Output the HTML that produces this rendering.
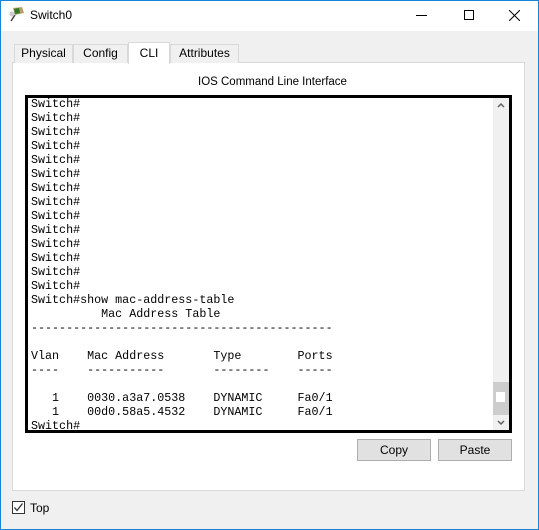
<!DOCTYPE html><html><head><style>
*{margin:0;padding:0;box-sizing:border-box}
body{width:539px;height:530px;background:#f0f0f0;font-family:"Liberation Sans",sans-serif;font-size:12px;position:relative;overflow:hidden}
.abs{position:absolute}
.tab{position:absolute;top:44px;height:19px;border:1px solid #d9d9d9;border-bottom:none;background:#f0f0f0;font-size:12px;text-align:center;line-height:17px;color:#000}
pre{font-family:"Liberation Mono",monospace;font-size:11.7px;line-height:14px;color:#000;position:absolute;left:3px;top:-1px}
.btn{position:absolute;top:439px;width:74px;height:22px;background:#e1e1e1;border:1px solid #adadad;text-align:center;line-height:20px;font-size:12px}
</style></head><body>
<div class="abs" style="left:0;top:0;width:539px;height:31px;background:#fff"></div>
<svg class="abs" style="left:8px;top:6px" width="18" height="18" viewBox="0 0 18 18"><path d="M5 2l9-1 2 6-9 2z" fill="#b8a060"/><path d="M6 3l5-1 1 5-5 1z" fill="#2a7a2a"/><path d="M7 9l-4 6" stroke="#444" stroke-width="1.5"/><circle cx="4" cy="8" r="2.5" fill="#ccc"/></svg>
<div class="abs" style="left:30px;top:8px;font-size:12px">Switch0</div>
<div class="abs" style="left:416px;top:15px;width:11px;height:1px;background:#000"></div>
<div class="abs" style="left:464px;top:10px;width:10px;height:10px;border:1px solid #000"></div>
<svg class="abs" style="left:509px;top:10px" width="11" height="11"><path d="M0 0L11 11M11 0L0 11" stroke="#000" stroke-width="1"/></svg>
<div class="abs" style="left:12px;top:62px;width:513px;height:429px;background:#fff;border:1px solid #d9d9d9"></div>
<div class="tab" style="left:14px;width:59px">Physical</div>
<div class="tab" style="left:73px;width:55px">Config</div>
<div class="tab" style="left:128px;top:42px;height:22px;width:42px;background:#fff;line-height:21px">CLI</div>
<div class="tab" style="left:170px;width:69px">Attributes</div>
<div class="abs" style="left:198px;top:76px;font-size:11.5px">IOS Command Line Interface</div>
<div class="abs" style="left:25px;top:95px;width:487px;height:338px;border:3px solid #000;background:#fff;overflow:hidden">
<pre>Switch#
Switch#
Switch#
Switch#
Switch#
Switch#
Switch#
Switch#
Switch#
Switch#
Switch#
Switch#
Switch#
Switch#
Switch#show mac-address-table
          Mac Address Table
-------------------------------------------

Vlan    Mac Address       Type        Ports
----    -----------       --------    -----

   1    0030.a3a7.0538    DYNAMIC     Fa0/1
   1    00d0.58a5.4532    DYNAMIC     Fa0/1
Switch#</pre>
<div class="abs" style="left:465px;top:0;width:16px;height:332px;background:#f0f0f0"></div>
<div class="abs" style="left:465px;top:284px;width:16px;height:33px;background:#cdcdcd"></div>
<div class="abs" style="left:468px;top:294px;width:9px;height:10px;background:#fff"></div>
<svg class="abs" style="left:469px;top:4px" width="8" height="6"><path d="M1 5L4 2 7 5" stroke="#606060" stroke-width="1.5" fill="none"/></svg>
<svg class="abs" style="left:469px;top:322px" width="8" height="6"><path d="M1 1L4 4 7 1" stroke="#606060" stroke-width="1.5" fill="none"/></svg>
</div>
<div class="btn" style="left:357px">Copy</div>
<div class="btn" style="left:438px">Paste</div>
<div class="abs" style="left:12px;top:501px;width:13px;height:13px;border:1px solid #333;background:#fff"></div>
<svg class="abs" style="left:13px;top:502px" width="11" height="11"><path d="M1.5 5.5l2.5 3 5.5-7" stroke="#333" stroke-width="1.3" fill="none"/></svg>
<div class="abs" style="left:30px;top:501px;font-size:12px">Top</div>
<div class="abs" style="left:0;top:0;width:539px;height:530px;border:1px solid #1883d7"></div>
</body></html>
